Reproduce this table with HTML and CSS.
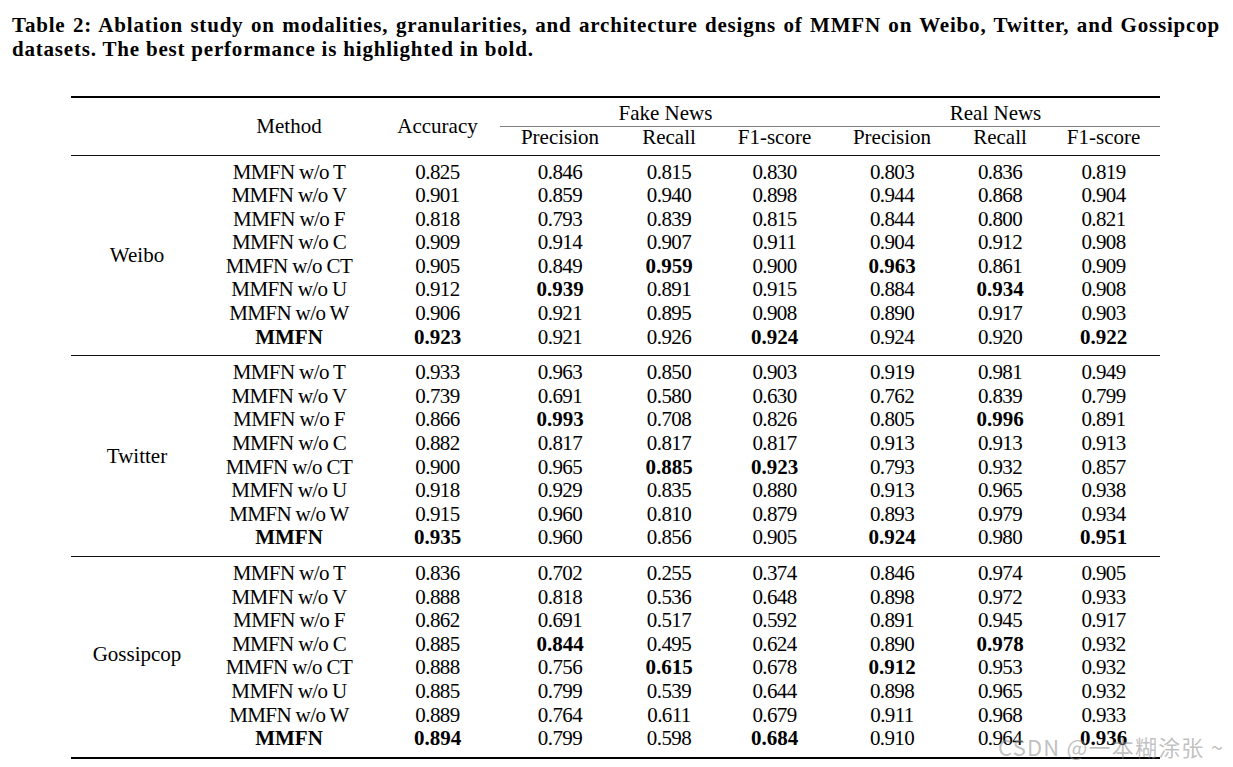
FILE: index.html
```html
<!DOCTYPE html>
<html lang="en">
<head>
<meta charset="utf-8">
<title>Table 2: Ablation study</title>
<link rel="stylesheet" href="styles.css">
</head>
<body>
<main class="page">
  <p class="caption">
    <span class="cap-line cap-first">Table 2: Ablation study on modalities, granularities, and architecture designs of MMFN on Weibo, Twitter, and Gossipcop</span>
    <span class="cap-line">datasets. The best performance is highlighted in bold.</span>
  </p>
  <table class="results">
    <colgroup>
      <col class="c-group"><col class="c-method"><col class="c-acc">
      <col class="c-fp"><col class="c-fr"><col class="c-ff">
      <col class="c-rp"><col class="c-rr"><col class="c-rf">
    </colgroup>
    <thead>
      <tr class="h1">
        <th rowspan="2" class="hspan"></th>
        <th rowspan="2" class="hspan">Method</th>
        <th rowspan="2" class="hspan">Accuracy</th>
        <th colspan="3" class="grp">Fake News</th>
        <th colspan="3" class="grp">Real News</th>
      </tr>
      <tr class="h2">
        <th>Precision</th><th>Recall</th><th>F1-score</th>
        <th>Precision</th><th>Recall</th><th>F1-score</th>
      </tr>
    </thead>
    <tbody class="group">
      <tr><td rowspan="8" class="ds">Weibo</td><td>MMFN w/o T</td><td>0.825</td><td>0.846</td><td>0.815</td><td>0.830</td><td>0.803</td><td>0.836</td><td>0.819</td></tr>
      <tr><td>MMFN w/o V</td><td>0.901</td><td>0.859</td><td>0.940</td><td>0.898</td><td>0.944</td><td>0.868</td><td>0.904</td></tr>
      <tr><td>MMFN w/o F</td><td>0.818</td><td>0.793</td><td>0.839</td><td>0.815</td><td>0.844</td><td>0.800</td><td>0.821</td></tr>
      <tr><td>MMFN w/o C</td><td>0.909</td><td>0.914</td><td>0.907</td><td>0.911</td><td>0.904</td><td>0.912</td><td>0.908</td></tr>
      <tr><td>MMFN w/o CT</td><td>0.905</td><td>0.849</td><td class="b">0.959</td><td>0.900</td><td class="b">0.963</td><td>0.861</td><td>0.909</td></tr>
      <tr><td>MMFN w/o U</td><td>0.912</td><td class="b">0.939</td><td>0.891</td><td>0.915</td><td>0.884</td><td class="b">0.934</td><td>0.908</td></tr>
      <tr><td>MMFN w/o W</td><td>0.906</td><td>0.921</td><td>0.895</td><td>0.908</td><td>0.890</td><td>0.917</td><td>0.903</td></tr>
      <tr><td class="b">MMFN</td><td class="b">0.923</td><td>0.921</td><td>0.926</td><td class="b">0.924</td><td>0.924</td><td>0.920</td><td class="b">0.922</td></tr>
    </tbody>
    <tbody class="group">
      <tr><td rowspan="8" class="ds">Twitter</td><td>MMFN w/o T</td><td>0.933</td><td>0.963</td><td>0.850</td><td>0.903</td><td>0.919</td><td>0.981</td><td>0.949</td></tr>
      <tr><td>MMFN w/o V</td><td>0.739</td><td>0.691</td><td>0.580</td><td>0.630</td><td>0.762</td><td>0.839</td><td>0.799</td></tr>
      <tr><td>MMFN w/o F</td><td>0.866</td><td class="b">0.993</td><td>0.708</td><td>0.826</td><td>0.805</td><td class="b">0.996</td><td>0.891</td></tr>
      <tr><td>MMFN w/o C</td><td>0.882</td><td>0.817</td><td>0.817</td><td>0.817</td><td>0.913</td><td>0.913</td><td>0.913</td></tr>
      <tr><td>MMFN w/o CT</td><td>0.900</td><td>0.965</td><td class="b">0.885</td><td class="b">0.923</td><td>0.793</td><td>0.932</td><td>0.857</td></tr>
      <tr><td>MMFN w/o U</td><td>0.918</td><td>0.929</td><td>0.835</td><td>0.880</td><td>0.913</td><td>0.965</td><td>0.938</td></tr>
      <tr><td>MMFN w/o W</td><td>0.915</td><td>0.960</td><td>0.810</td><td>0.879</td><td>0.893</td><td>0.979</td><td>0.934</td></tr>
      <tr><td class="b">MMFN</td><td class="b">0.935</td><td>0.960</td><td>0.856</td><td>0.905</td><td class="b">0.924</td><td>0.980</td><td class="b">0.951</td></tr>
    </tbody>
    <tbody class="group last">
      <tr><td rowspan="8" class="ds">Gossipcop</td><td>MMFN w/o T</td><td>0.836</td><td>0.702</td><td>0.255</td><td>0.374</td><td>0.846</td><td>0.974</td><td>0.905</td></tr>
      <tr><td>MMFN w/o V</td><td>0.888</td><td>0.818</td><td>0.536</td><td>0.648</td><td>0.898</td><td>0.972</td><td>0.933</td></tr>
      <tr><td>MMFN w/o F</td><td>0.862</td><td>0.691</td><td>0.517</td><td>0.592</td><td>0.891</td><td>0.945</td><td>0.917</td></tr>
      <tr><td>MMFN w/o C</td><td>0.885</td><td class="b">0.844</td><td>0.495</td><td>0.624</td><td>0.890</td><td class="b">0.978</td><td>0.932</td></tr>
      <tr><td>MMFN w/o CT</td><td>0.888</td><td>0.756</td><td class="b">0.615</td><td>0.678</td><td class="b">0.912</td><td>0.953</td><td>0.932</td></tr>
      <tr><td>MMFN w/o U</td><td>0.885</td><td>0.799</td><td>0.539</td><td>0.644</td><td>0.898</td><td>0.965</td><td>0.932</td></tr>
      <tr><td>MMFN w/o W</td><td>0.889</td><td>0.764</td><td>0.611</td><td>0.679</td><td>0.911</td><td>0.968</td><td>0.933</td></tr>
      <tr><td class="b">MMFN</td><td class="b">0.894</td><td>0.799</td><td>0.598</td><td class="b">0.684</td><td>0.910</td><td>0.964</td><td class="b">0.936</td></tr>
    </tbody>
  </table>
</main>
<div class="watermark">CSDN @一本糊涂张 ~</div>
</body>
</html>
```
FILE: styles.css
```css
html, body {
  margin: 0;
  padding: 0;
  background: #ffffff;
}

body {
  font-family: "Liberation Serif", "Times New Roman", serif;
  color: #000;
  width: 1233px;
  height: 767px;
  overflow: hidden;
  position: relative;
}

.page {
  display: flex;
  flex-direction: column;
  padding: 13px 0 0 12px;
}

.caption {
  margin: 0;
  width: 1208px;
  font-weight: bold;
  font-size: 21px;
  line-height: 24px;
  letter-spacing: 0.8px;
}

.cap-line {
  display: block;
  white-space: nowrap;
}

.cap-first {
  text-align: justify;
  text-align-last: justify;
}

.results {
  margin: 35px 0 0 59px;
  border-collapse: collapse;
  table-layout: fixed;
  width: 1089px;
  font-size: 21px;
  border-top: 2px solid #000;
  border-bottom: 2px solid #000;
}

.c-group { width: 132px; }
.c-method { width: 172px; }
.c-acc { width: 125px; }
.c-fp { width: 120px; }
.c-fr { width: 98px; }
.c-ff { width: 113px; }
.c-rp { width: 122px; }
.c-rr { width: 94px; }
.c-rf { width: 113px; }

.results th {
  font-weight: normal;
  text-align: center;
  padding: 0;
  line-height: 20px;
  white-space: nowrap;
}

.h1 th {
  height: 29px;
  vertical-align: top;
  padding-top: 5px;
  box-sizing: border-box;
}

.h1 th.hspan {
  vertical-align: middle;
  padding-top: 0;
}

.h1 th.grp {
  border-bottom: 1px solid #808080;
}

.h2 th {
  height: 29px;
  vertical-align: top;
  box-sizing: border-box;
}

thead {
  border-bottom: 1px solid #111;
}

.group {
  border-bottom: 1px solid #111;
}

.group.last {
  border-bottom: 2px solid #000;
}

.results td {
  text-align: center;
  padding: 0;
  line-height: 23.6px;
  white-space: nowrap;
  letter-spacing: -0.6px;
  vertical-align: middle;
}

.group tr:first-child td {
  padding-top: 5px;
}

.group tr:last-child td {
  padding-bottom: 6px;
}

.results td.ds {
  letter-spacing: 0;
  padding: 0 0 4px 0;
}

.last .results td.ds,
.group.last td.ds {
  padding-bottom: 9px;
}

.results td.b {
  font-weight: bold;
  letter-spacing: 0;
}

.watermark {
  position: absolute;
  left: 998px;
  top: 733px;
  font-family: "Noto Sans CJK SC", "Noto Sans", sans-serif;
  font-size: 22px;
  line-height: 26px;
  letter-spacing: 1.2px;
  color: rgba(140, 140, 140, 0.55);
  white-space: nowrap;
}
```
